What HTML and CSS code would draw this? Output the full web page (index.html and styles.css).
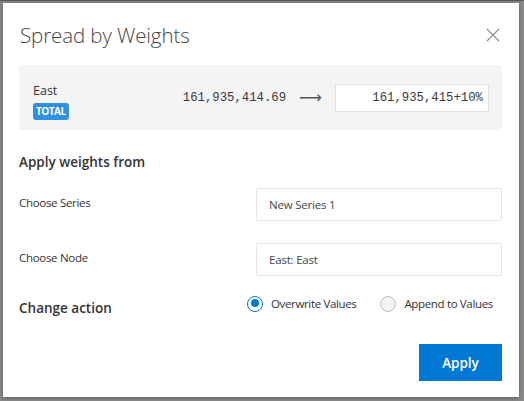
FILE: index.html
```html
<!DOCTYPE html>
<html>
<head>
<meta charset="utf-8">
<link rel="stylesheet" href="styles.css">
</head>
<body>
<div class="overlay">
  <div class="dialog">
    <div class="header">
      <h1 class="title">Spread by Weights</h1>
      <svg class="close" width="14" height="14" viewBox="0 0 14 14"><path d="M1 1 L13 13 M13 1 L1 13" stroke="#8a8a8a" stroke-width="1.1" fill="none"/></svg>
    </div>
    <div class="summary">
      <div class="node">
        <div class="node-name">East</div>
        <span class="badge">TOTAL</span>
      </div>
      <div class="values">
        <span class="old">161,935,414.69</span>
        <span class="arrow">⟶</span>
        <div class="new">161,935,415+10%</div>
      </div>
    </div>
    <div class="section-title">Apply weights from</div>
    <div class="form">
      <div class="row">
        <div class="label">Choose Series</div>
        <div class="field">New Series 1</div>
      </div>
      <div class="row">
        <div class="label">Choose Node</div>
        <div class="field">East: East</div>
      </div>
    </div>
    <div class="action-row">
      <div class="section-title action-title">Change action</div>
      <div class="radios">
        <label class="radio"><span class="dot checked"></span>Overwrite Values</label>
        <label class="radio"><span class="dot"></span>Append to Values</label>
      </div>
    </div>
    <div class="footer">
      <button class="apply">Apply</button>
    </div>
  </div>
</div>
</body>
</html>
```
FILE: styles.css
```css
* { box-sizing: border-box; }
html, body { margin: 0; padding: 0; }
body {
  width: 524px;
  height: 401px;
  background: #8a8a8a;
  font-family: "Open Sans", "Noto Sans", sans-serif;
  color: #333;
  overflow: hidden;
}
.overlay {
  width: 524px;
  height: 401px;
  padding: 3px 5px 4px 3px;
  border-top: 1px solid #5a5a5a;
}
.dialog {
  width: 516px;
  height: 394px;
  margin-top: -1px;
  background: #fff;
  box-shadow: 0 1px 4px rgba(0,0,0,0.35);
  padding: 0 17px 0 16px;
  display: flex;
  flex-direction: column;
}
.header {
  height: 62px;
  display: flex;
  align-items: center;
  justify-content: space-between;
  padding: 2px 0 0 1px;
}
.title {
  margin: 0;
  font-weight: 300;
  font-size: 20.5px;
  color: #444;
  letter-spacing: -0.1px;
}
.close { margin-right: 2px; }
.summary {
  height: 65px;
  background: #f4f4f4;
  display: flex;
  align-items: center;
  justify-content: space-between;
  padding: 0 13px 0 14px;
}
.node {
  padding-top: 9px;
}
.node-name {
  font-size: 12.5px;
  color: #333;
  line-height: 14px;
}
.badge {
  display: inline-block;
  background: #2f90e0;
  color: #fff;
  font-size: 10px;
  font-weight: 700;
  border-radius: 3px;
  padding: 1px 3px;
  line-height: 15px;
  letter-spacing: -0.5px;
}
.values {
  display: flex;
  align-items: center;
}
.old {
  font-family: "Liberation Mono", monospace;
  font-size: 12.3px;
  color: #3a3a3a;
}
.arrow {
  font-size: 16px;
  color: #555;
  margin: 0 13px 0 13px;
  font-family: "DejaVu Sans", sans-serif;
  line-height: 20px;
}
.new {
  width: 154px;
  height: 28px;
  background: #fff;
  border: 1px solid #e1e1e1;
  text-align: right;
  padding: 0 5px;
  font-family: "Liberation Mono", monospace;
  font-size: 12.3px;
  line-height: 26px;
  color: #3a3a3a;
}
.section-title {
  font-size: 13.5px;
  font-weight: 600;
  color: #333;
  margin-top: 22px;
  line-height: 20px;
}
.form {
  display: flex;
  flex-direction: column;
  gap: 22px;
  margin-top: 16px;
}
.row {
  display: flex;
  align-items: center;
  justify-content: space-between;
}
.label {
  font-size: 11.5px;
  color: #333;
  letter-spacing: -0.3px;
  margin-top: -4px;
}
.field {
  width: 246px;
  height: 33px;
  border: 1px solid #e4e4e4;
  border-radius: 2px;
  font-size: 11.5px;
  letter-spacing: -0.2px;
  color: #444;
  padding: 0 12px;
  line-height: 31px;
}
.action-row {
  display: flex;
  align-items: center;
  margin-top: 18px;
}
.action-title {
  margin-top: 0;
  width: 228px;
  flex-shrink: 0;
  position: relative;
  top: 4px;
}
.radios {
  display: flex;
  gap: 24px;
  white-space: nowrap;
  margin-top: -1px;
}
.radio {
  display: flex;
  align-items: center;
  font-size: 11.5px;
  letter-spacing: -0.35px;
  color: #333;
}
.dot {
  width: 16px;
  height: 16px;
  border-radius: 50%;
  border: 1px solid #bdbdbd;
  background: #f2f2f2;
  margin-right: 8px;
  position: relative;
  flex-shrink: 0;
}
.dot.checked {
  border: 1.5px solid #0078d4;
  background: #fff;
}
.dot.checked::after {
  content: "";
  position: absolute;
  left: 2.5px;
  top: 2.5px;
  width: 8px;
  height: 8px;
  border-radius: 50%;
  background: #0078d4;
}
.footer {
  display: flex;
  justify-content: flex-end;
  margin-top: 30px;
}
.apply {
  width: 83px;
  height: 37px;
  background: #0078d4;
  border: none;
  color: #fff;
  font-family: "Open Sans", sans-serif;
  font-size: 13.5px;
  font-weight: 600;
  padding: 0;
}
```
